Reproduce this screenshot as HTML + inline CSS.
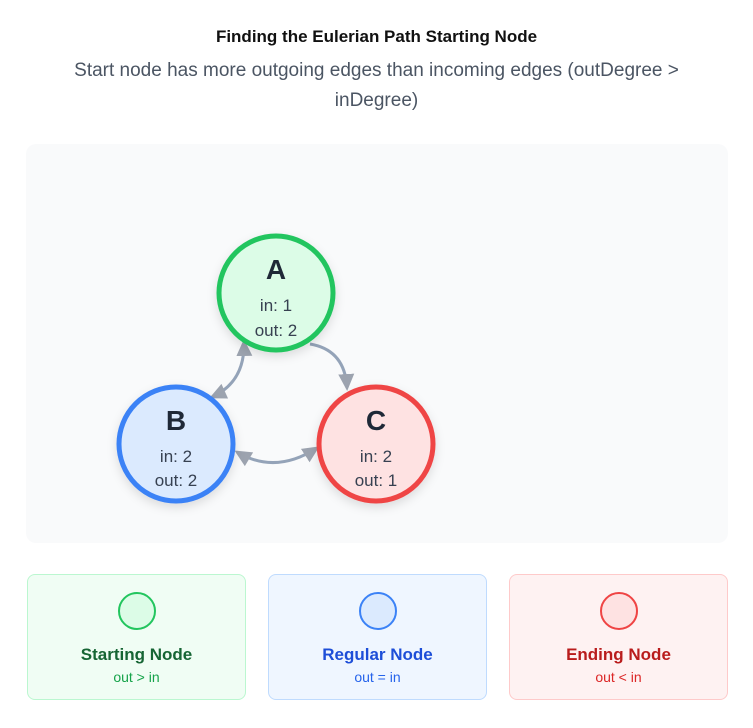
<!DOCTYPE html>
<html><head><style>
body{margin:0;background:#fff;font-family:"Liberation Sans","DejaVu Sans",sans-serif;width:753px;height:728px;overflow:hidden;position:relative}
.t{position:absolute;top:27px;left:0;width:753px;text-align:center;font-weight:bold;font-size:17px;color:#111}
.s{position:absolute;top:56px;left:66px;width:621px;text-align:center;font-size:19px;line-height:30px;color:#4b5563}
.box{position:absolute;left:26px;top:144px;width:702px;height:399px;background:#f9fafb;border-radius:10px}
.card{position:absolute;top:574px;width:219px;height:126px;border-radius:8px;box-sizing:border-box;text-align:center}
.card .c{position:absolute;left:90px;top:17px;width:38px;height:38px;border-radius:50%;box-sizing:border-box;border:2px solid}
.card .n{position:absolute;top:70px;width:100%;font-size:17px;font-weight:bold}
.card .d{position:absolute;top:94px;width:100%;font-size:14px}
</style></head><body>
<div class="t">Finding the Eulerian Path Starting Node</div>
<div class="s">Start node has more outgoing edges than incoming edges (outDegree &gt; inDegree)</div>
<div class="box"></div>
<svg width="753" height="728" style="position:absolute;left:0;top:0">
<defs>
<filter id="sh" x="-30%" y="-30%" width="160%" height="160%"><feDropShadow dx="0" dy="4" stdDeviation="5" flood-color="#000" flood-opacity="0.12"/></filter>
<marker id="ar" markerWidth="18" markerHeight="18" refX="14" refY="8" orient="auto" markerUnits="userSpaceOnUse"><path d="M0,0 L17,8 L0,16 z" fill="#9ca3af"/></marker>
<marker id="al" markerWidth="18" markerHeight="18" refX="3" refY="8" orient="auto" markerUnits="userSpaceOnUse"><path d="M17,0 L0,8 L17,16 z" fill="#9ca3af"/></marker>
</defs>
<g fill="none" stroke="#94a3b8" stroke-width="3">
<path d="M310,344 Q345,350 347,388" marker-end="url(#ar)"/>
<path d="M212,397 Q245,382 244,342" marker-start="url(#al)" marker-end="url(#ar)"/>
<path d="M237,452 Q275,475 317,448" marker-start="url(#al)" marker-end="url(#ar)"/>
</g>
<g stroke-width="5" filter="url(#sh)">
<circle cx="276" cy="293" r="57" fill="#dcfce7" stroke="#22c55e"/>
<circle cx="176" cy="444" r="57" fill="#dbeafe" stroke="#3b82f6"/>
<circle cx="376" cy="444" r="57" fill="#fee2e2" stroke="#ef4444"/>
</g>
<g fill="#374151" text-anchor="middle" font-family="Liberation Sans, sans-serif">
<text x="276" y="279" font-size="28" font-weight="bold" fill="#1f2937">A</text>
<text x="276" y="311" font-size="17">in: 1</text>
<text x="276" y="336" font-size="17">out: 2</text>
<text x="176" y="430" font-size="28" font-weight="bold" fill="#1f2937">B</text>
<text x="176" y="462" font-size="17">in: 2</text>
<text x="176" y="486" font-size="17">out: 2</text>
<text x="376" y="430" font-size="28" font-weight="bold" fill="#1f2937">C</text>
<text x="376" y="462" font-size="17">in: 2</text>
<text x="376" y="486" font-size="17">out: 1</text>
</g>
</svg>
<div class="card" style="left:27px;background:#f0fdf4;border:1px solid #bbf7d0"><div class="c" style="background:#dcfce7;border-color:#22c55e"></div><div class="n" style="color:#166534">Starting Node</div><div class="d" style="color:#16a34a">out &gt; in</div></div>
<div class="card" style="left:268px;background:#eff6ff;border:1px solid #bfdbfe"><div class="c" style="background:#dbeafe;border-color:#3b82f6"></div><div class="n" style="color:#1d4ed8">Regular Node</div><div class="d" style="color:#2563eb">out = in</div></div>
<div class="card" style="left:509px;background:#fef2f2;border:1px solid #fecaca"><div class="c" style="background:#fee2e2;border-color:#ef4444"></div><div class="n" style="color:#b91c1c">Ending Node</div><div class="d" style="color:#dc2626">out &lt; in</div></div>
</body></html>
